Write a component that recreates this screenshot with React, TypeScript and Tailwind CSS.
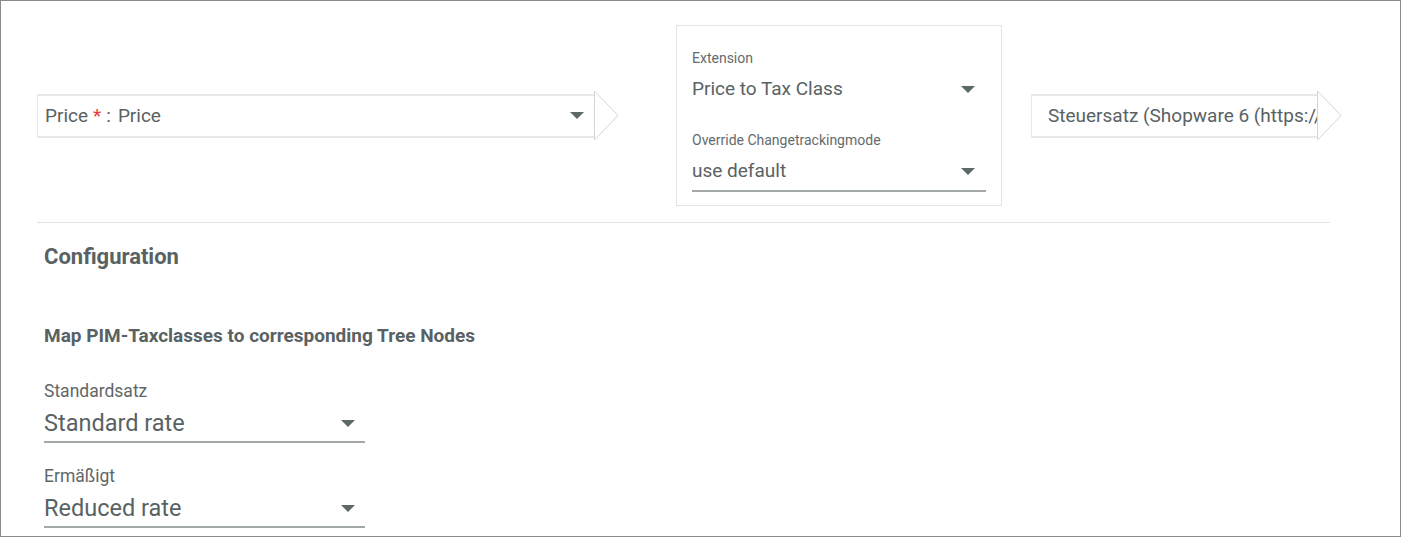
import React from 'react';

const Caret = () => (
  <svg width="14" height="7" viewBox="0 0 14 7" className="shrink-0">
    <polygon points="0,0 14,0 7,7" fill="#5d6868" />
  </svg>
);

const Arrow = () => (
  <svg width="25" height="49" viewBox="0 0 25 49" className="shrink-0">
    <polyline points="0.5,0 24,24.5 0.5,49" fill="none" stroke="#d4d4d4" strokeWidth="1" />
    <line x1="0.5" y1="0" x2="0.5" y2="49" stroke="#d4d4d4" strokeWidth="1" />
  </svg>
);

function Field({ label, value }: { label: string; value: string }) {
  return (
    <div className="w-[321px]">
      <div className="text-[17.5px] leading-[22px] text-[#5f6768]">{label}</div>
      <div className="mt-[5px] flex items-center justify-between border-b-2 border-[#a3a8a8] pb-[2px] pr-[10px]">
        <span className="text-[23.5px] leading-[32px] text-[#596263]">{value}</span>
        <Caret />
      </div>
    </div>
  );
}

export default function App() {
  return (
    <div
      className="w-[1401px] h-[537px] overflow-hidden border border-[#8a8a8a] bg-white pl-[36px] pr-[70px] text-[#596263]"
      style={{ fontFamily: 'Roboto, "Noto Sans", sans-serif' }}
    >
      {/* mapping row */}
      <div className="flex items-center pt-[24px] pb-[16px] border-b border-[#e2e2e2]">
        <div className="flex shrink-0 items-center">
          <div className="flex w-[557px] h-[44px] items-center justify-between border-l border-y-2 border-[#e8e8e8] pl-[7px] pr-[10px]">
            <span className="text-[19px] leading-[24px] whitespace-nowrap">
              Price<span className="ml-[5px] text-[#e53935]">*</span>
              <span className="ml-[5px]">:</span>
              <span className="ml-[7px]">Price</span>
            </span>
            <Caret />
          </div>
          <Arrow />
        </div>

        <div className="ml-[57px] w-[326px] h-[181px] shrink-0 border border-[#e3e3e3] px-[15px] pt-[24px]">
          <div className="text-[14px] leading-[16px] text-[#646b6c]">Extension</div>
          <div className="mt-[11px] flex h-[24px] items-center justify-between pr-[11px]">
            <span className="text-[19px] leading-[24px]">Price to Tax Class</span>
            <Caret />
          </div>
          <div className="mt-[31px] text-[14px] leading-[16px] text-[#646b6c]">Override Changetrackingmode</div>
          <div className="mt-[11px] flex items-center justify-between border-b-2 border-[#a3a8a8] pb-[7px] pr-[11px]">
            <span className="text-[19px] leading-[24px]">use default</span>
            <Caret />
          </div>
        </div>

        <div className="ml-[29px] flex shrink-0 items-center">
          <div className="flex w-[286px] h-[44px] items-center overflow-hidden whitespace-nowrap border-l border-y-2 border-[#e8e8e8] pl-[16px]">
            <span className="text-[19px] leading-[24px]">Steuersatz (Shopware 6 (https://demo.shopware.store))</span>
          </div>
          <Arrow />
        </div>
      </div>

      {/* configuration */}
      <div className="pl-[7px] pt-[20px]">
        <h2 className="text-[22px] leading-[28px] font-bold">Configuration</h2>
        <h3 className="mt-[53px] text-[19px] leading-[24px] font-bold">Map PIM-Taxclasses to corresponding Tree Nodes</h3>
        <div className="mt-[32px] flex flex-col gap-[22px]">
          <Field label="Standardsatz" value="Standard rate" />
          <Field label="Ermäßigt" value="Reduced rate" />
        </div>
      </div>
    </div>
  );
}
